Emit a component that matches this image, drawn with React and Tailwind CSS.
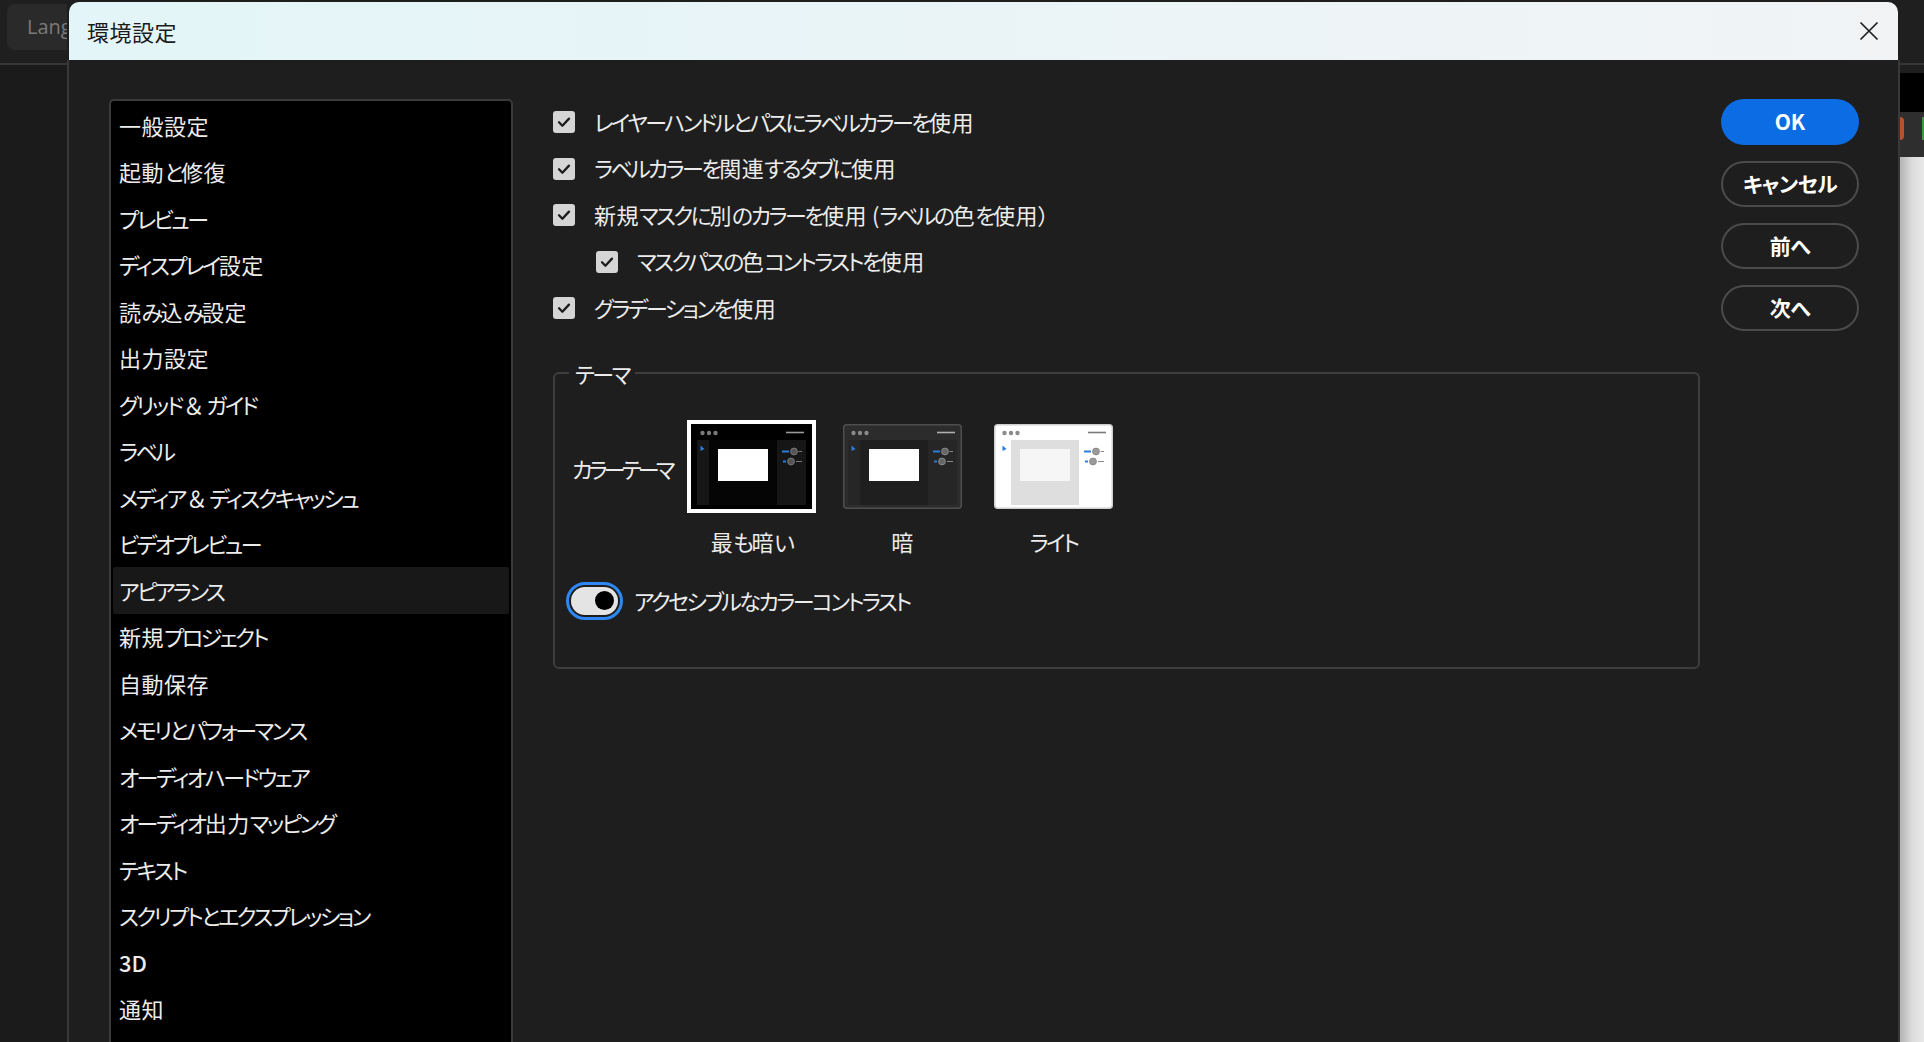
import React from "react";

const FONT = "font-['Noto_Sans_CJK_JP','Noto_Sans',sans-serif] [font-feature-settings:'palt']";
const TXT = "text-[22px] whitespace-nowrap";

// kana in the reference font are narrow and kanji are wide, so space each run differently
const Jp = ({ text, kana = "tracking-[-2.5px]" }) =>
  text.match(/[\u4e00-\u9fff\uff06]+|[\x20-\x7e]+|[^\u4e00-\u9fff\uff06\x20-\x7e]+/g).map((run, i) => {
    const cls = /[\u4e00-\u9fff]/.test(run)
      ? "tracking-[0.5px]"
      : /\uff06/.test(run)
        ? "mx-[3px] tracking-[0.5px]"
        : /[\x20-\x7e]/.test(run)
          ? "tracking-normal"
          : kana;
    return (
      <span key={i} className={cls}>
        {run}
      </span>
    );
  });

const navItems = [
  "一般設定",
  "起動と修復",
  "プレビュー",
  "ディスプレイ設定",
  "読み込み設定",
  "出力設定",
  "グリッド＆ガイド",
  "ラベル",
  "メディア＆ディスクキャッシュ",
  "ビデオプレビュー",
  "アピアランス",
  "新規プロジェクト",
  "自動保存",
  "メモリとパフォーマンス",
  "オーディオハードウェア",
  "オーディオ出力マッピング",
  "テキスト",
  "スクリプトとエクスプレッション",
  "3D",
  "通知",
];

const options = [
  { label: "レイヤーハンドルとパスにラベルカラーを使用" },
  { label: "ラベルカラーを関連するタブに使用" },
  { label: "新規マスクに別のカラーを使用 (ラベルの色を使用）" },
  { label: "マスクパスの色コントラストを使用", indent: true },
  { label: "グラデーションを使用" },
];

const Checkbox = () => (
  <span className="flex h-[22px] w-[22px] shrink-0 items-center justify-center rounded-[3px] bg-[#d5d5d5]">
    <svg width="16" height="16" viewBox="0 0 16 16">
      <path d="M3 8.3 L6.4 11.8 L13 4.6" fill="none" stroke="#1c1c1c" strokeWidth="2.3" strokeLinecap="round" strokeLinejoin="round" />
    </svg>
  </span>
);

// little picture of the app window for each colour theme
const ThemeThumb = ({ bg, panel, center, rect, border, dots, line, knob }) => (
  <svg width="119" height={border ? 85 : 83} viewBox={border ? "0 0 119 85" : "0 1 119 83"}>
    <rect x="0.75" y="0.75" width="117.5" height="83.5" rx="3" fill={bg} stroke={border || bg} strokeWidth="1.5" />
    <circle cx="10.5" cy="9" r="2.2" fill={dots} />
    <circle cx="17" cy="9" r="2.2" fill={dots} />
    <circle cx="23.5" cy="9" r="2.2" fill={dots} />
    <line x1="94" y1="8.5" x2="112" y2="8.5" stroke={line} strokeWidth="1.6" />
    <rect x="5" y="16" width="12" height="65" fill={panel} />
    <rect x="17" y="16" width="68" height="65" fill={center} />
    <rect x="85" y="16" width="29" height="65" fill={panel} />
    <rect x="26" y="25" width="50" height="32" fill={rect} />
    <path d="M8.5 21.5 L12.5 25 L8.5 27 Z" fill="#2a7de1" />
    <line x1="90" y1="27.5" x2="97" y2="27.5" stroke="#2a7de1" strokeWidth="2" />
    <circle cx="102" cy="27.5" r="3.4" fill={knob} stroke={dots} strokeWidth="1" />
    <line x1="106.5" y1="27.5" x2="110" y2="27.5" stroke={dots} strokeWidth="1" />
    <line x1="91" y1="37.5" x2="94" y2="37.5" stroke="#2a7de1" strokeWidth="2" />
    <circle cx="99" cy="37.5" r="3.4" fill={knob} stroke={dots} strokeWidth="1" />
    <line x1="104" y1="37.5" x2="110" y2="37.5" stroke={dots} strokeWidth="1" />
  </svg>
);

const themes = [
  { name: "最も暗い", selected: true, props: { bg: "#000000", panel: "#161616", center: "#050505", rect: "#ffffff", dots: "#7a7a7a", line: "#9a9a9a", knob: "#555555" } },
  { name: "暗", props: { bg: "#2c2c2c", panel: "#262626", center: "#1f1f1f", rect: "#ffffff", border: "#4e4e4e", dots: "#8a8a8a", line: "#b0b0b0", knob: "#666666" } },
  { name: "ライト", props: { bg: "#ffffff", panel: "#ffffff", center: "#dedede", rect: "#f6f6f6", border: "#cfcfcf", dots: "#8a8a8a", line: "#7a7a7a", knob: "#9a9a9a" } },
];

const buttons = ["キャンセル", "前へ", "次へ"];

export default function App() {
  return (
    <div className={`flex h-[1042px] w-[1924px] overflow-hidden bg-[#1e1e1e] text-[#ececec] ${FONT}`}>
      {/* app behind the dialog, left side */}
      <div className="flex w-[67px] shrink-0 flex-col overflow-hidden">
        <div className="h-[65px] border-b-2 border-[#363636] bg-[#1f1f1f] pl-[7px] pt-[4px]">
          <div className="flex h-[46px] w-[120px] items-center rounded-lg bg-[#2a2a2a] pl-[20px] font-['Open_Sans',sans-serif] text-[20px] text-[#7a7a7a]">
            Lang
          </div>
        </div>
        <div className="flex-1 bg-[#1b1b1b]" />
      </div>

      {/* dialog */}
      <div className="flex w-[1833px] shrink-0 flex-col pt-[2px]">
        <div className="mx-[2px] flex h-[58px] shrink-0 items-center justify-between rounded-t-[10px] bg-gradient-to-r from-[#e3f5f8] to-[#f1f3f5] pl-[18px] pr-[19px]">
          <span className="text-[22px] tracking-[0.5px] text-[#1b1b1b]">環境設定</span>
          <svg width="20" height="20" viewBox="0 0 20 20">
            <path d="M1.5 1.5 L18.5 18.5 M18.5 1.5 L1.5 18.5" stroke="#1e1e1e" strokeWidth="1.7" />
          </svg>
        </div>

        <div className="flex flex-1 border-x-2 border-[#383838] bg-[#1e1e1e] pl-[40px] pr-[39px] pt-[39px]">
          {/* category list */}
          <div className="h-[1000px] w-[404px] shrink-0 rounded-[5px] border-2 border-[#3a3a3a] bg-black px-[2px] pt-[1px]">
            {navItems.map((item) => (
              <div
                key={item}
                className={`flex h-[46.5px] items-center pl-[6px] ${TXT} ${item === "アピアランス" ? "rounded-[2px] bg-[#181818]" : ""} ${item === "3D" ? "font-medium" : ""}`}
              >
                <Jp text={item} />
              </div>
            ))}
          </div>

          {/* settings */}
          <div className="ml-[40px] flex w-[1147px] shrink-0 flex-col">
            {options.map((opt) => (
              <div key={opt.label} className={`flex h-[46.5px] items-center ${opt.indent ? "pl-[43px]" : ""}`}>
                <Checkbox />
                <span className={`ml-[19px] -translate-y-[1px] ${TXT}`}>
                  <Jp text={opt.label} />
                </span>
              </div>
            ))}

            <fieldset className="mt-[26px] rounded-[6px] border-2 border-[#3d3d3d]">
              <legend className={`ml-[14px] px-[6px] leading-[30px] ${TXT}`}>
                <Jp text="テーマ" />
              </legend>
              <div className="pb-[47px] pl-[11px] pt-[32px]">
                <div className="ml-[6px] flex items-start">
                  <span className={`mt-[33px] w-[104px] leading-[30px] ${TXT}`}>
                    <Jp text="カラーテーマ" kana="tracking-[-3.8px]" />
                  </span>
                  {themes.map((t) => (
                    <div key={t.name} className="flex w-[151px] flex-col items-center">
                      <div className="flex h-[93px] items-center">
                        {t.selected ? (
                          <div className="border-[4px] border-white bg-black p-[1px]">
                            <ThemeThumb {...t.props} />
                          </div>
                        ) : (
                          <ThemeThumb {...t.props} />
                        )}
                      </div>
                      <span className={`mt-[13px] leading-[30px] ${TXT}`}>
                        <Jp text={t.name} />
                      </span>
                    </div>
                  ))}
                </div>

                <div className="mt-[26px] flex items-center">
                  <div className="flex h-[38px] w-[57px] items-center rounded-full border-[3px] border-[#2d88f3] p-[2px]">
                    <div className="flex h-full w-full items-center justify-end rounded-full bg-[#e4e4e4] pr-[4px]">
                      <div className="h-[19px] w-[19px] rounded-full bg-black" />
                    </div>
                  </div>
                  <span className={`ml-[11px] ${TXT}`}>
                    <Jp text="アクセシブルなカラーコントラスト" />
                  </span>
                </div>
              </div>
            </fieldset>
          </div>

          {/* buttons */}
          <div className="ml-[21px] flex w-[138px] shrink-0 flex-col gap-[16px]">
            <button className="flex h-[46px] items-center justify-center rounded-full bg-[#0b6ce3] text-[21px] font-bold text-white">
              OK
            </button>
            {buttons.map((b) => (
              <button
                key={b}
                className="flex h-[46px] items-center justify-center rounded-full border-2 border-[#4b4b4b] text-[21px] font-bold tracking-[-0.5px] text-white"
              >
                {b}
              </button>
            ))}
          </div>
        </div>
      </div>

      {/* app behind the dialog, right side */}
      <div className="flex w-[24px] shrink-0 flex-col">
        <div className="h-[65px] border-b-2 border-[#363636] bg-[#1f1f1f]" />
        <div className="h-[8px] bg-[#1f1f1f]" />
        <div className="h-[39px] bg-black" />
        <div className="flex h-[45px] items-start justify-between bg-[#2e2e2e] pt-[5px]">
          <div className="h-[23px] w-[4px] rounded-r-sm bg-[#b9502f]" />
          <div className="h-[23px] w-[2px] bg-[#3f9a3f]" />
        </div>
        <div className="flex-1 bg-gradient-to-r from-[#b3b3b3] via-[#dcdcdc] to-[#e9e9e9]" />
      </div>
    </div>
  );
}
